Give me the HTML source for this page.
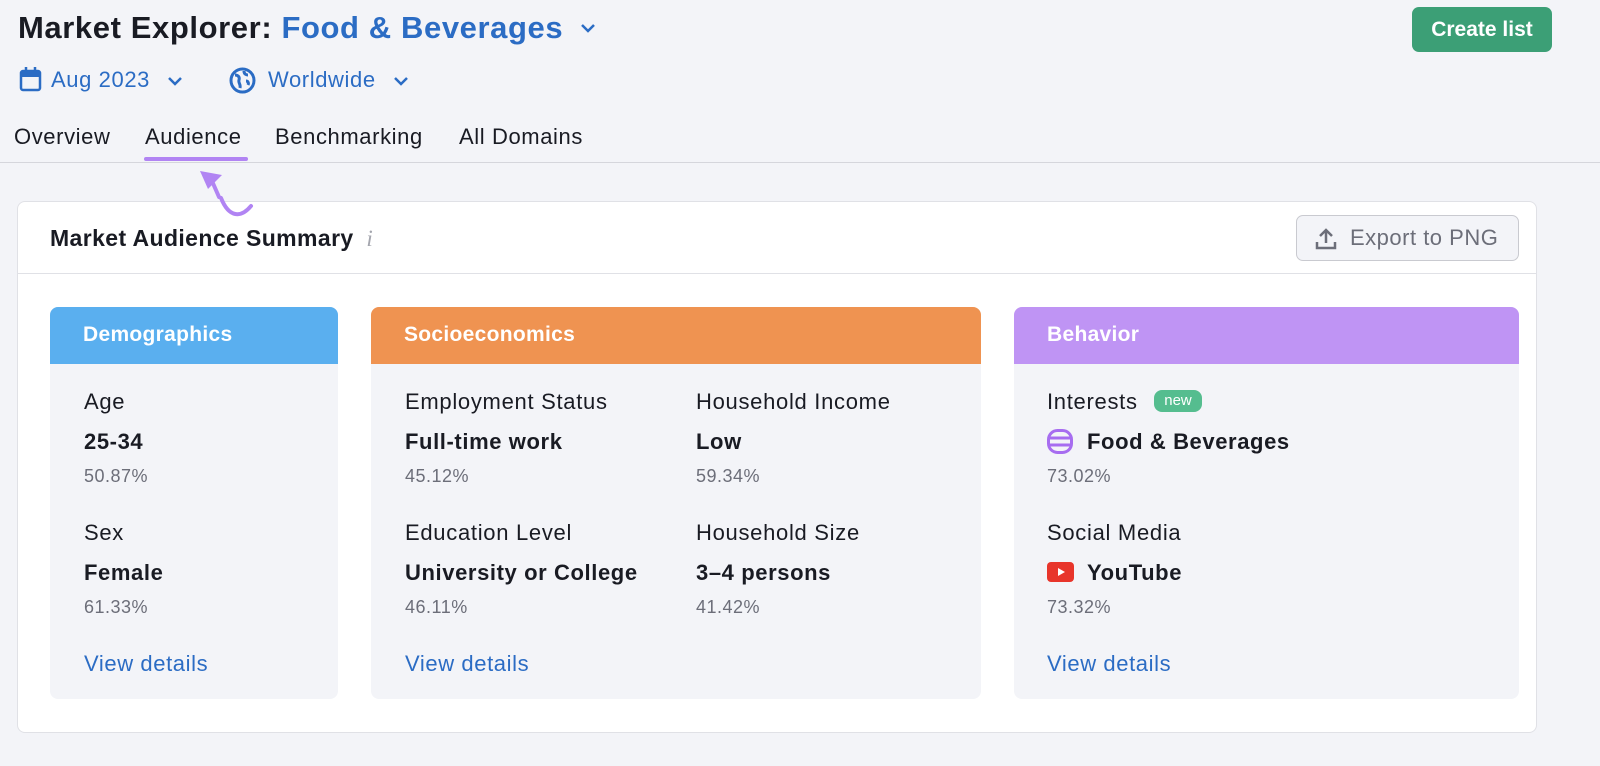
<!DOCTYPE html><html><head><style>
*{margin:0;padding:0;box-sizing:border-box}
body{width:1600px;height:766px;background:#f3f4f8;font-family:"Liberation Sans",sans-serif;position:relative;overflow:hidden;color:#191b23}
.a{position:absolute;white-space:nowrap}
.blue{color:#2b6cc4}
.card{position:absolute;left:17px;top:201px;width:1520px;height:532px;background:#fff;border:1px solid #e0e1e6;border-radius:8px}
.p{position:absolute;top:307px;height:392px;background:#f3f4f8;border-radius:8px;overflow:hidden}
.ph{height:57px;color:#fff;font-weight:bold;font-size:21px;padding:16px 0 0 33px;letter-spacing:0.3px}
.lb{font-size:22px;color:#191b23;letter-spacing:0.7px}
.v{font-size:22px;font-weight:bold;letter-spacing:0.6px}
.pc{font-size:18px;color:#6c6e79;letter-spacing:0.5px}
.vd{font-size:22px;color:#2b6cc4;letter-spacing:0.6px}
.tab{font-size:22px;letter-spacing:0.6px}
</style></head><body>
<div class="a" style="left:18px;top:10px;font-size:31px;font-weight:bold;letter-spacing:0.6px">Market Explorer: <span class="blue">Food &amp; Beverages</span></div>
<svg class="a" style="left:580px;top:22px" width="16" height="12"><path d="M2 3l6 6 6-6" stroke="#2b6cc4" stroke-width="2.5" fill="none"/></svg>
<div class="a" style="left:1412px;top:7px;width:140px;height:45px;background:#3c9f76;border-radius:7px;color:#fff;font-weight:bold;font-size:21px;text-align:center;line-height:45px">Create list</div>
<svg class="a" style="left:19px;top:66px" width="24" height="27"><rect x="2" y="5" width="19" height="19" rx="2" fill="none" stroke="#2b6cc4" stroke-width="2.5"/><rect x="2" y="5" width="19" height="6" fill="#2b6cc4"/><path d="M7 1v6M16 1v6" stroke="#2b6cc4" stroke-width="2.5"/></svg>
<div class="a blue" style="left:51px;top:67px;font-size:22px;letter-spacing:0.6px">Aug 2023</div>
<svg class="a" style="left:167px;top:75px" width="16" height="12"><path d="M2 3l6 6 6-6" stroke="#2b6cc4" stroke-width="2.5" fill="none"/></svg>
<svg class="a" style="left:229px;top:67px" width="27" height="27"><circle cx="13.5" cy="13.5" r="11.5" fill="none" stroke="#2b6cc4" stroke-width="3"/><path d="M6 8c3 0 5 2 4 5s2 4 1 8M15 4c0 3 2 4 4 4M17 14c2 0 3 2 2 4" stroke="#2b6cc4" stroke-width="3" fill="none"/></svg>
<div class="a blue" style="left:268px;top:67px;font-size:22px;letter-spacing:0.6px">Worldwide</div>
<svg class="a" style="left:393px;top:75px" width="16" height="12"><path d="M2 3l6 6 6-6" stroke="#2b6cc4" stroke-width="2.5" fill="none"/></svg>
<div class="a tab" style="left:14px;top:124px">Overview</div>
<div class="a tab" style="left:145px;top:124px">Audience</div>
<div class="a tab" style="left:275px;top:124px">Benchmarking</div>
<div class="a tab" style="left:459px;top:124px">All Domains</div>
<div class="a" style="left:0;top:162px;width:1600px;height:1px;background:#d5d6dc"></div>
<div class="a" style="left:144px;top:157px;width:104px;height:4px;background:#b184f3;border-radius:2px"></div>
<div class="card">
<div class="a" style="left:32px;top:23px;font-size:23px;font-weight:bold;letter-spacing:0.4px">Market Audience Summary <span style="color:#a4a6ae;font-style:italic;font-weight:normal;font-family:'Liberation Serif',serif;margin-left:6px">i</span></div>
<div class="a" style="left:1278px;top:13px;width:223px;height:46px;border:1px solid #c9cad0;border-radius:7px;background:#f3f4f8"></div>
<svg class="a" style="left:1296px;top:25px" width="24" height="24"><path d="M12 16V3M6 9l6-6 6 6M3 15v6h18v-6" stroke="#6c6e79" stroke-width="2.5" fill="none"/></svg>
<div class="a" style="left:1332px;top:23px;font-size:22px;color:#6c6e79;letter-spacing:0.5px">Export to PNG</div>
<div class="a" style="left:0;top:71px;width:1518px;height:1px;background:#e0e1e6"></div>
</div>
<svg class="a" style="left:190px;top:163px" width="70" height="60"><path d="M61 43c-10 12-22 12-30-8" stroke="#b184f3" stroke-width="4" fill="none" stroke-linecap="round"/><path d="M10 8l22 4-14 14z" fill="#b184f3"/><path d="M22 18l7 16" stroke="#b184f3" stroke-width="4" stroke-linecap="round"/></svg>
<div class="p" style="left:50px;width:288px"><div class="ph" style="background:#5aafef">Demographics</div></div>
<div class="p" style="left:371px;width:610px"><div class="ph" style="background:#ef9351">Socioeconomics</div></div>
<div class="p" style="left:1014px;width:505px"><div class="ph" style="background:#bf94f4">Behavior</div></div>
<div class="a lb" style="left:84px;top:389px">Age</div><div class="a v" style="left:84px;top:429px">25-34</div><div class="a pc" style="left:84px;top:466px">50.87%</div>
<div class="a lb" style="left:84px;top:520px">Sex</div><div class="a v" style="left:84px;top:560px">Female</div><div class="a pc" style="left:84px;top:597px">61.33%</div>
<div class="a vd" style="left:84px;top:651px">View details</div>
<div class="a lb" style="left:405px;top:389px">Employment Status</div><div class="a v" style="left:405px;top:429px">Full-time work</div><div class="a pc" style="left:405px;top:466px">45.12%</div>
<div class="a lb" style="left:405px;top:520px">Education Level</div><div class="a v" style="left:405px;top:560px">University or College</div><div class="a pc" style="left:405px;top:597px">46.11%</div>
<div class="a lb" style="left:696px;top:389px">Household Income</div><div class="a v" style="left:696px;top:429px">Low</div><div class="a pc" style="left:696px;top:466px">59.34%</div>
<div class="a lb" style="left:696px;top:520px">Household Size</div><div class="a v" style="left:696px;top:560px">3–4 persons</div><div class="a pc" style="left:696px;top:597px">41.42%</div>
<div class="a vd" style="left:405px;top:651px">View details</div>
<div class="a lb" style="left:1047px;top:389px">Interests</div>
<div class="a" style="left:1154px;top:390px;width:48px;height:22px;background:#55bd8f;border-radius:8px;color:#fff;font-size:15px;text-align:center;line-height:21px">new</div>
<svg class="a" style="left:1047px;top:429px" width="26" height="25"><rect x="1.5" y="1.5" width="23" height="22" rx="9" fill="none" stroke="#a76df0" stroke-width="3"/><path d="M2 9h22M2 16h22" stroke="#a76df0" stroke-width="3"/></svg>
<div class="a v" style="left:1087px;top:429px">Food &amp; Beverages</div><div class="a pc" style="left:1047px;top:466px">73.02%</div>
<div class="a lb" style="left:1047px;top:520px">Social Media</div>
<svg class="a" style="left:1047px;top:562px" width="27" height="20"><rect width="27" height="20" rx="4" fill="#e8352b"/><path d="M11 6l7 4-7 4z" fill="#fff"/></svg>
<div class="a v" style="left:1087px;top:560px">YouTube</div><div class="a pc" style="left:1047px;top:597px">73.32%</div>
<div class="a vd" style="left:1047px;top:651px">View details</div>
</body></html>
